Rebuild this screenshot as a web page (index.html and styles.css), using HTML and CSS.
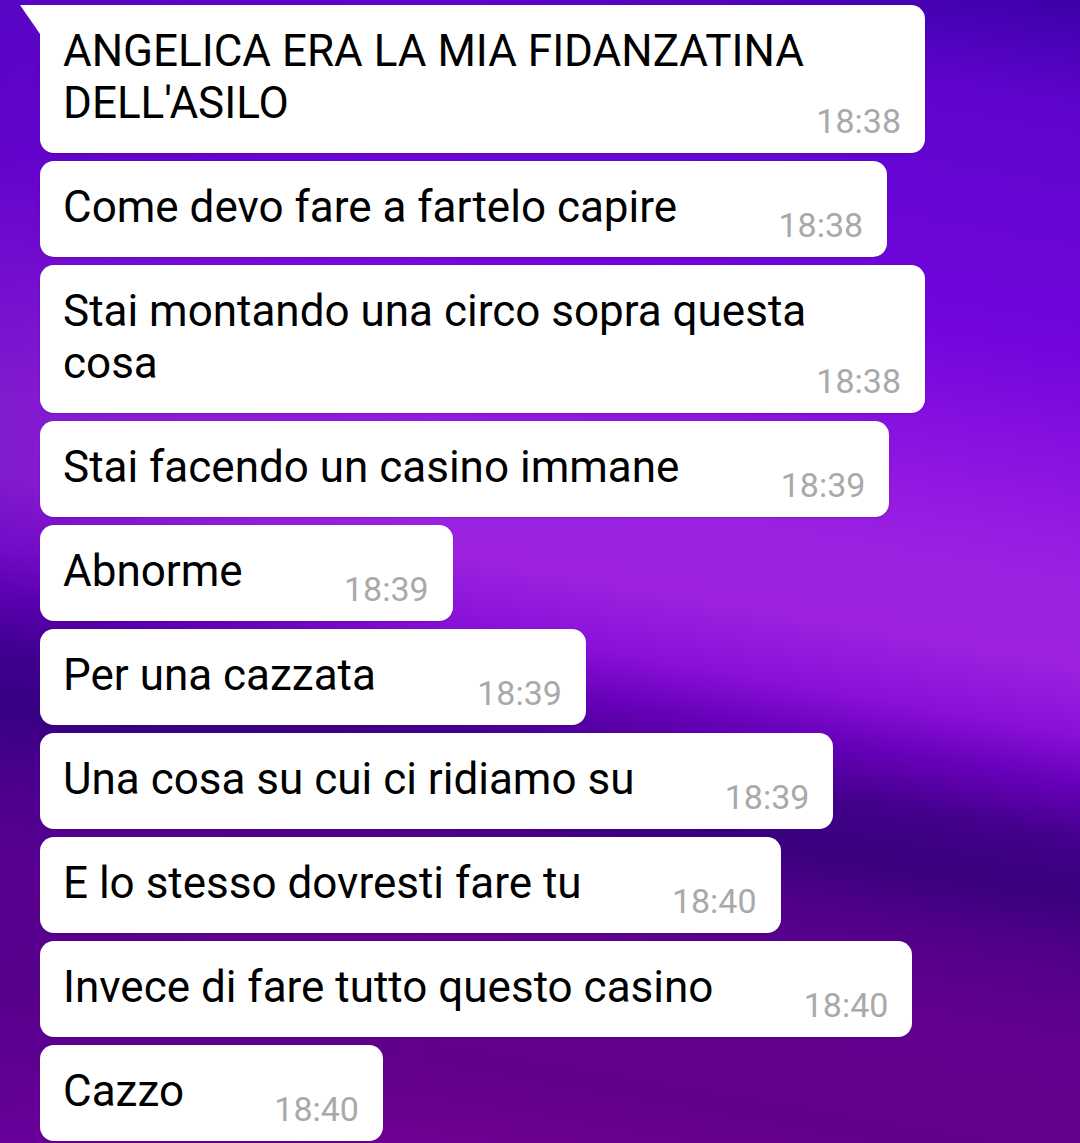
FILE: index.html
```html
<!DOCTYPE html>
<html lang="it">
<head>
  <meta charset="UTF-8">
  <meta name="viewport" content="width=device-width, initial-scale=1.0">
  <title>Chat</title>
  <link rel="stylesheet" href="styles.css">
</head>
<body>
  <section class="chat">
    <div class="bubble first">
      <div class="text">ANGELICA ERA LA MIA FIDANZATINA DELL'ASILO<span class="spacer"></span></div>
      <div class="time">18:38</div>
    </div>
    <div class="bubble">
      <div class="text">Come devo fare a fartelo capire<span class="spacer"></span></div>
      <div class="time">18:38</div>
    </div>
    <div class="bubble">
      <div class="text">Stai montando una circo sopra questa cosa<span class="spacer"></span></div>
      <div class="time">18:38</div>
    </div>
    <div class="bubble">
      <div class="text">Stai facendo un casino immane<span class="spacer"></span></div>
      <div class="time">18:39</div>
    </div>
    <div class="bubble">
      <div class="text">Abnorme<span class="spacer"></span></div>
      <div class="time">18:39</div>
    </div>
    <div class="bubble">
      <div class="text">Per una cazzata<span class="spacer"></span></div>
      <div class="time">18:39</div>
    </div>
    <div class="bubble tight">
      <div class="text">Una cosa su cui ci ridiamo su<span class="spacer"></span></div>
      <div class="time">18:39</div>
    </div>
    <div class="bubble tight">
      <div class="text">E lo stesso dovresti fare tu<span class="spacer"></span></div>
      <div class="time">18:40</div>
    </div>
    <div class="bubble tight">
      <div class="text">Invece di fare tutto questo casino<span class="spacer"></span></div>
      <div class="time">18:40</div>
    </div>
    <div class="bubble tight">
      <div class="text">Cazzo<span class="spacer"></span></div>
      <div class="time">18:40</div>
    </div>
  </section>
</body>
</html>
```

FILE: styles.css
```css
html, body {
  height: 100%;
}

body {
  margin: 0;
  font-family: Roboto, "Noto Sans", Arial, sans-serif;
  background:
    linear-gradient(90deg, rgba(50, 0, 150, 0.25) 0%, rgba(50, 0, 150, 0) 40%),
    linear-gradient(190deg,
      #3c00a8 0%,
      #5e04cc 8%,
      #6606d4 16%,
      #7204dc 26%,
      #8c14e0 36%,
      #9c22e2 44%,
      #9c22e0 50%,
      #8a10d8 55%,
      #6600b8 59%,
      #44008c 63%,
      #38007e 67%,
      #52008a 72%,
      #640090 79%,
      #62008a 88%,
      #7a009a 100%);
  overflow: hidden;
}

.chat {
  display: flex;
  flex-direction: column;
  align-items: flex-start;
  gap: 8px;
  padding: 5px 0 0 40px;
}

.bubble {
  position: relative;
  box-sizing: border-box;
  width: fit-content;
  max-width: 885px;
  padding: 20px 24px 16px 23px;
  background: #fff;
  border-radius: 14px;
  box-shadow: 0 1px 2px rgba(60, 0, 90, 0.25);
}

/* little tail on the first message of the group */
.bubble.first {
  border-top-left-radius: 0;
}

.bubble.first::before {
  content: "";
  position: absolute;
  top: 0;
  left: -20px;
  border-top: 29px solid #fff;
  border-left: 20px solid transparent;
}

.text {
  font-size: 44px;
  line-height: 52px;
  color: #000;
}

.spacer {
  display: inline-block;
  width: 186px;
  height: 1px;
}

.tight .spacer {
  width: 175px;
}

.time {
  margin-top: -24px;
  text-align: right;
  font-size: 34px;
  line-height: 32px;
  color: #a9a9a9;
}
```
